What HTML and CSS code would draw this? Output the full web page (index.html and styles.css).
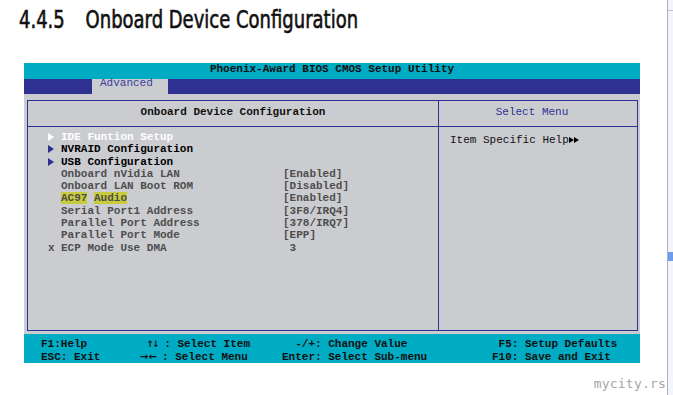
FILE: index.html
```html
<!DOCTYPE html>
<html lang="en">
<head>
  <meta charset="UTF-8" />
  <title>Onboard Device Configuration</title>
  <link rel="stylesheet" href="styles.css">
</head>
<body>
  <div class="page">
    <h1 class="title"><span class="num">4.4.5</span>Onboard Device Configuration</h1>

    <div class="bios">
      <div class="topbar">Phoenix-Award BIOS CMOS Setup Utility</div>
      <div class="tabbar"><div class="tab">Advanced</div></div>

      <div class="screen">
        <div class="frame">
          <div class="head head-left">Onboard Device Configuration</div>
          <div class="head head-right">Select Menu</div>

          <div class="items">
            <div class="row white"><span class="mark"><i class="tri"></i></span><span>IDE Funtion Setup</span></div>
            <div class="row black"><span class="mark"><i class="tri"></i></span><span>NVRAID Configuration</span></div>
            <div class="row black"><span class="mark"><i class="tri"></i></span><span>USB Configuration</span></div>
            <div class="row"><span class="mark"></span><span>Onboard nVidia LAN</span><span>[Enabled]</span></div>
            <div class="row"><span class="mark"></span><span>Onboard LAN Boot ROM</span><span>[Disabled]</span></div>
            <div class="row"><span class="mark"></span><span><b class="hl">AC97</b> <b class="hl">Audio</b></span><span>[Enabled]</span></div>
            <div class="row"><span class="mark"></span><span>Serial Port1 Address</span><span>[3F8/IRQ4]</span></div>
            <div class="row"><span class="mark"></span><span>Parallel Port Address</span><span>[378/IRQ7]</span></div>
            <div class="row"><span class="mark"></span><span>Parallel Port Mode</span><span>[EPP]</span></div>
            <div class="row"><span class="mark">x</span><span>ECP Mode Use DMA</span><span> 3</span></div>
          </div>

          <div class="help">Item Specific Help<i class="tri small"></i><i class="tri small"></i></div>
        </div>
      </div>

      <div class="footer">
        <span>F1:Help</span><span> <i class="arrows">↑↓</i> : Select Item</span><span>  -/+: Change Value</span><span> F5: Setup Defaults</span>
        <span>ESC: Exit</span><span><i class="arrows wide">→←</i>: Select Menu</span><span>Enter: Select Sub-menu</span><span>F10: Save and Exit</span>
      </div>
    </div>

    <div class="watermark">mycity.rs</div>
  </div>

  <div class="scroll">
    <div class="scroll-top"></div>
    <div class="thumb"></div>
  </div>
</body>
</html>
```

FILE: styles.css
```css
body {
  margin: 0;
  background: #fff;
  display: flex;
  height: 395px;
  overflow: hidden;
}

.page {
  width: 667px;
  position: relative;
}

.title {
  margin: 0;
  padding: 6px 0 0 19px;
  font-family: "DejaVu Sans Condensed", "DejaVu Sans", sans-serif;
  font-stretch: condensed;
  font-weight: normal;
  font-size: 25px;
  line-height: 28px;
  color: #111;
  white-space: nowrap;
  transform: scaleX(0.8);
  transform-origin: 19px 0;
  -webkit-text-stroke: 0.6px #111;
}

.title .num {
  margin-right: 26px;
}

.bios {
  margin: 29px 0 0 24px;
  width: 616px;
  font-family: "Liberation Mono", "Courier New", monospace;
  font-weight: bold;
  font-size: 11px;
}

.topbar {
  height: 16px;
  line-height: 12px;
  background: #00abc4;
  color: #111;
  text-align: center;
}

.tabbar {
  height: 15px;
  background: #2e3192;
  padding-left: 68px;
}

.tab {
  width: 76px;
  height: 15px;
  line-height: 9px;
  background: #cbccd0;
  color: #3a3d9c;
  font-weight: normal;
  text-indent: 8px;
}

.screen {
  background: #cbccd0;
  padding: 6px 2px 3px 3px;
}

.frame {
  height: 231px;
  box-sizing: border-box;
  border: 1px solid #2e3192;
  display: grid;
  grid-template-columns: 411px 1fr;
  grid-template-rows: 26px 1fr;
}

.head {
  border-bottom: 1px solid #2e3192;
  text-align: center;
  line-height: 23px;
}

.head-left {
  border-right: 1px solid #2e3192;
  color: #111;
}

.head-right {
  color: #2e3192;
  font-weight: normal;
  padding-right: 12px;
}

.items {
  border-right: 1px solid #2e3192;
  padding: 4px 0 0 20px;
  color: #4e4e4e;
}

.row {
  display: grid;
  grid-template-columns: 13px 222px auto;
  height: 12.3px;
  line-height: 12.3px;
  white-space: pre;
}

.row.white { color: #fff; }
.row.black { color: #000; }

.mark {
  display: flex;
  align-items: center;
}

.tri {
  display: inline-block;
  width: 0;
  height: 0;
  border-left: 6px solid #2e3192;
  border-top: 4px solid transparent;
  border-bottom: 4px solid transparent;
}

.row.white .tri {
  border-left-color: #fff;
}

.tri.small {
  border-left: 5px solid #000;
  border-top-width: 3.5px;
  border-bottom-width: 3.5px;
}

.hl {
  background: #c8cc3a;
  font-weight: bold;
}

.help {
  padding: 7px 0 0 11px;
  color: #111;
  font-weight: normal;
  line-height: 12px;
}

.footer {
  height: 29px;
  box-sizing: border-box;
  background: #00abc4;
  padding: 4px 0 0 17px;
  display: grid;
  grid-template-columns: 99px 142px 210px auto;
  line-height: 12.3px;
  color: #111;
  white-space: pre;
}

.arrows {
  font-style: normal;
  font-family: "DejaVu Sans", sans-serif;
  font-weight: bold;
  font-size: 9px;
  display: inline-block;
  width: 11px;
  letter-spacing: -2px;
  overflow: hidden;
  vertical-align: bottom;
}

.arrows.wide {
  width: 22px;
  font-size: 10px;
  letter-spacing: 0;
}

.watermark {
  position: absolute;
  right: 1px;
  bottom: 4px;
  font-family: "DejaVu Sans Mono", monospace;
  font-size: 13px;
  color: #a6a6a6;
  letter-spacing: 0.2px;
}

.scroll {
  flex: 1;
  border-left: 1px solid #aab0c4;
  background: #f3f5fa;
  position: relative;
}

.scroll-top {
  height: 10px;
  border-bottom: 1px solid #b8c4dc;
}

.thumb {
  position: absolute;
  left: 0;
  right: 0;
  top: 252px;
  height: 9px;
  background: #6d9ce8;
}
```
